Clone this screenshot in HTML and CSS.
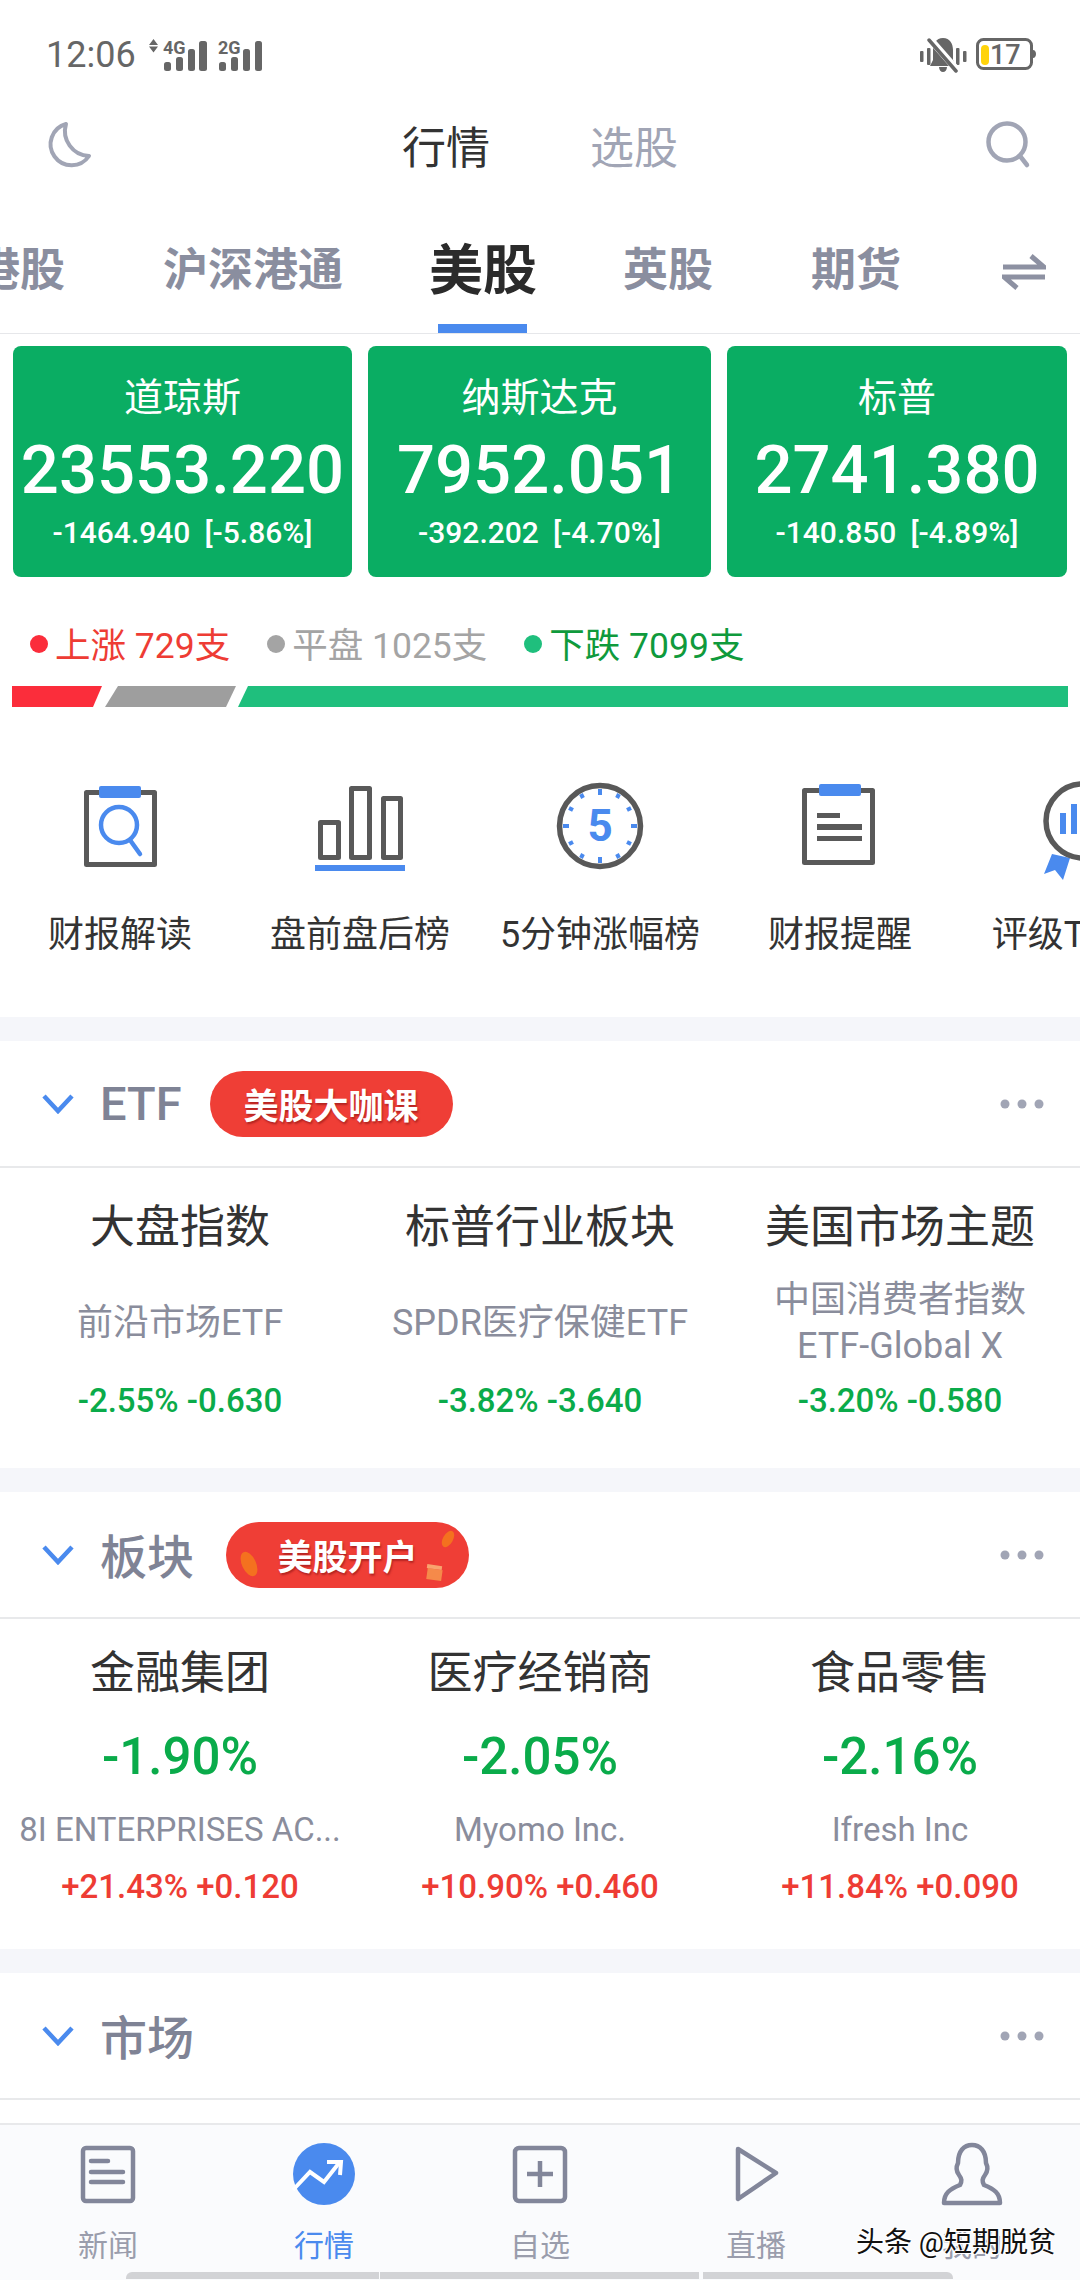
FILE: index.html
```html
<!DOCTYPE html>
<html lang="zh-CN">
<head>
  <meta charset="UTF-8" />
  <title>行情 - 美股</title>
  <link rel="stylesheet" href="styles.css">
</head>
<body>
<div class="page">

  <!-- Status bar -->
  <div class="status">
    <span class="time">12:06</span>
    <svg class="signal" width="114" height="34" viewBox="0 0 114 34">
      <path d="M0 7l4.500-6 4.500 6zM0 8.500h9l-4.500 6z" fill="#666"/>
      <text x="14" y="16" class="net">4G</text>
      <rect x="15" y="24" width="7" height="9" rx="2.500" fill="#666"/>
      <rect x="27" y="19" width="7" height="14" rx="2.500" fill="#666"/>
      <rect x="39" y="11" width="7" height="22" rx="2.500" fill="#666"/>
      <rect x="50" y="3" width="8" height="30" rx="2.500" fill="#666"/>
      <text x="69" y="16" class="net">2G</text>
      <rect x="70" y="24" width="7" height="9" rx="2.500" fill="#666"/>
      <rect x="82" y="19" width="7" height="14" rx="2.500" fill="#666"/>
      <rect x="94" y="11" width="7" height="22" rx="2.500" fill="#666"/>
      <rect x="106" y="3" width="7" height="30" rx="2.500" fill="#666"/>
    </svg>
    <svg class="sys" width="116" height="36" viewBox="0 0 116 36">
      <rect x="0" y="14" width="3.500" height="11" rx="1" fill="#666"/>
      <rect x="7" y="11" width="3.500" height="17" rx="1" fill="#666"/>
      <rect x="36" y="11" width="3.500" height="17" rx="1" fill="#666"/>
      <rect x="43" y="14" width="3.500" height="11" rx="1" fill="#666"/>
      <path d="M23 1c7 0 10 6 10 12v10l3 6H10l3-6V13C13 7 16 1 23 1zM19 30h8c0 3-2 5-4 5s-4-2-4-5z" fill="#666"/>
      <path d="M9 1l29 33" stroke="#fff" stroke-width="7"/>
      <path d="M9 3l27 31" stroke="#666" stroke-width="3.500" stroke-linecap="round"/>
      <rect x="57.500" y="2.500" width="54" height="29" rx="6" fill="none" stroke="#666" stroke-width="3"/>
      <rect x="61" y="8" width="8" height="20" rx="4" fill="#ffd30a"/>
      <path d="M113 13c2 0 3 2 3 4s-1 4-3 4z" fill="#666"/>
      <text x="70" y="27" class="batt">17</text>
    </svg>
  </div>

  <!-- Top bar -->
  <div class="topbar">
    <svg class="moon" width="48" height="48" viewBox="0 0 48 48">
      <path d="M22 3A21 21 0 1 0 45 35A25 25 0 0 1 22 3Z" fill="none" stroke="#a1a5b5" stroke-width="4" stroke-linejoin="round"/>
    </svg>
    <div class="switch">
      <span class="on">行情</span>
      <span>选股</span>
    </div>
    <svg class="search" width="50" height="52" viewBox="0 0 50 52">
      <circle cx="23" cy="23" r="18.500" fill="none" stroke="#a1a5b5" stroke-width="4.500"/>
      <path d="M36 37l7 9" stroke="#a1a5b5" stroke-width="4.500" stroke-linecap="round"/>
    </svg>
  </div>

  <!-- Market tabs -->
  <div class="tabs">
    <span class="tab">港股</span>
    <span class="tab">沪深港通</span>
    <span class="tab active">美股</span>
    <span class="tab">英股</span>
    <span class="tab">期货</span>
    <svg class="swap" width="44" height="36" viewBox="0 0 44 36">
      <path d="M1 13h41L29 2" fill="none" stroke="#8d91a2" stroke-width="5"/>
      <path d="M43 23H2l13 11" fill="none" stroke="#8d91a2" stroke-width="5"/>
    </svg>
  </div>

  <!-- Index cards -->
  <div class="cards">
    <div class="card">
      <div class="card-name">道琼斯</div>
      <div class="card-num">23553.220</div>
      <div class="card-sub"><span>-1464.940</span><span>[-5.86%]</span></div>
    </div>
    <div class="card">
      <div class="card-name">纳斯达克</div>
      <div class="card-num">7952.051</div>
      <div class="card-sub"><span>-392.202</span><span>[-4.70%]</span></div>
    </div>
    <div class="card">
      <div class="card-name">标普</div>
      <div class="card-num">2741.380</div>
      <div class="card-sub"><span>-140.850</span><span>[-4.89%]</span></div>
    </div>
  </div>

  <!-- Rise / fall counts -->
  <div class="breadth">
    <span class="count up"><i></i>上涨 729支</span>
    <span class="count flat"><i></i>平盘 1025支</span>
    <span class="count down"><i></i>下跌 7099支</span>
  </div>
  <div class="ratio">
    <div class="ratio-up"></div>
    <div class="ratio-flat"></div>
    <div class="ratio-down"></div>
  </div>

  <!-- Shortcuts -->
  <div class="shortcuts">
    <div class="shortcut">
      <svg width="100" height="100" viewBox="0 0 100 100">
        <rect x="16.500" y="12.500" width="68" height="72" fill="none" stroke="#595959" stroke-width="5" stroke-linejoin="round"/>
        <rect x="29" y="6" width="42" height="12" rx="2" fill="#4a8aee"/>
        <circle cx="49" cy="45" r="18" fill="none" stroke="#4a8aee" stroke-width="4.500"/>
        <path d="M60 60l10 14" stroke="#4a8aee" stroke-width="4.500" stroke-linecap="round"/>
      </svg>
      <span>财报解读</span>
    </div>
    <div class="shortcut">
      <svg width="100" height="100" viewBox="0 0 100 100">
        <rect x="10.500" y="42.500" width="18" height="35" fill="none" stroke="#595959" stroke-width="5" stroke-linejoin="round"/>
        <rect x="41.500" y="8.500" width="18" height="69" fill="none" stroke="#595959" stroke-width="5" stroke-linejoin="round"/>
        <rect x="73.500" y="18.500" width="17" height="59" fill="none" stroke="#595959" stroke-width="5" stroke-linejoin="round"/>
        <rect x="5" y="85" width="90" height="6" fill="#4a8aee"/>
      </svg>
      <span>盘前盘后榜</span>
    </div>
    <div class="shortcut">
      <svg width="100" height="100" viewBox="0 0 100 100">
        <circle cx="50" cy="46" r="40.500" fill="none" stroke="#595959" stroke-width="5.500"/>
        <path d="M50 9v6M50 77v6M13 46h6M81 46h6M69 14l-2 4M31 78l2-4M31 14l2 4M69 78l-2-4M19 28l4 2M81 28l-4 2M19 64l4-2M81 64l-4-2" stroke="#4a8aee" stroke-width="4"/>
        <text x="50" y="61" class="five">5</text>
      </svg>
      <span>5分钟涨幅榜</span>
    </div>
    <div class="shortcut">
      <svg width="100" height="100" viewBox="0 0 100 100">
        <rect x="14.500" y="10.500" width="68" height="72" fill="none" stroke="#595959" stroke-width="5" stroke-linejoin="round"/>
        <rect x="29" y="4" width="42" height="12" rx="2" fill="#4a8aee"/>
        <rect x="27" y="33" width="23" height="5" fill="#595959"/>
        <rect x="27" y="44" width="45" height="6" fill="#595959"/>
        <rect x="27" y="56" width="45" height="5" fill="#595959"/>
      </svg>
      <span>财报提醒</span>
    </div>
    <div class="shortcut">
      <svg width="100" height="100" viewBox="0 0 100 100">
        <path d="M22 74l-8 20 11-4 8 10 7-22z" fill="#4a8aee"/>
        <circle cx="53" cy="41" r="37" fill="#fff" stroke="#595959" stroke-width="5.500"/>
        <rect x="30" y="33" width="6" height="21" fill="#4a8aee"/>
        <rect x="41" y="24" width="6" height="30" fill="#4a8aee"/>
        <rect x="52" y="39" width="6" height="15" fill="#4a8aee"/>
      </svg>
      <span>评级TOP榜</span>
    </div>
  </div>

  <div class="gap"></div>

  <!-- ETF -->
  <div class="sec-head">
    <svg class="chev" width="32" height="20" viewBox="0 0 32 20"><path d="M2 2l14 15L30 2" fill="none" stroke="#4a8aee" stroke-width="4.500"/></svg>
    <span class="sec-title">ETF</span>
    <span class="pill">美股大咖课</span>
    <svg class="more" width="44" height="12" viewBox="0 0 44 12"><circle cx="5" cy="6" r="4.500"/><circle cx="22" cy="6" r="4.500"/><circle cx="39" cy="6" r="4.500"/></svg>
  </div>
  <div class="grid etf">
    <div class="cell">
      <div class="cell-title">大盘指数</div>
      <div class="cell-sub">前沿市场ETF</div>
      <div class="cell-row down-text">-2.55% -0.630</div>
    </div>
    <div class="cell">
      <div class="cell-title">标普行业板块</div>
      <div class="cell-sub">SPDR医疗保健ETF</div>
      <div class="cell-row down-text">-3.82% -3.640</div>
    </div>
    <div class="cell">
      <div class="cell-title">美国市场主题</div>
      <div class="cell-sub">中国消费者指数<br>ETF-Global X</div>
      <div class="cell-row down-text">-3.20% -0.580</div>
    </div>
  </div>

  <div class="gap"></div>

  <!-- Sectors -->
  <div class="sec-head">
    <svg class="chev" width="32" height="20" viewBox="0 0 32 20"><path d="M2 2l14 15L30 2" fill="none" stroke="#4a8aee" stroke-width="4.500"/></svg>
    <span class="sec-title cjk">板块</span>
    <span class="pill pill-open">美股开户
      <svg class="pill-art" width="243" height="66" viewBox="0 0 243 66">
        <ellipse cx="23" cy="42" rx="7" ry="13" transform="rotate(-25 23 42)" fill="#f4711f"/>
        <ellipse cx="222" cy="17" rx="5" ry="9" transform="rotate(30 222 17)" fill="#f4711f"/>
        <rect x="201" y="47" width="15" height="11" transform="rotate(8 208 52)" fill="#f58a4a"/>
        <rect x="201" y="43" width="15" height="4" transform="rotate(8 208 45)" fill="#f9a36e"/>
      </svg>
    </span>
    <svg class="more" width="44" height="12" viewBox="0 0 44 12"><circle cx="5" cy="6" r="4.500"/><circle cx="22" cy="6" r="4.500"/><circle cx="39" cy="6" r="4.500"/></svg>
  </div>
  <div class="grid sectors">
    <div class="cell">
      <div class="cell-title">金融集团</div>
      <div class="cell-pct down-text">-1.90%</div>
      <div class="cell-name">8I ENTERPRISES AC...</div>
      <div class="cell-row up-text">+21.43% +0.120</div>
    </div>
    <div class="cell">
      <div class="cell-title">医疗经销商</div>
      <div class="cell-pct down-text">-2.05%</div>
      <div class="cell-name">Myomo Inc.</div>
      <div class="cell-row up-text">+10.90% +0.460</div>
    </div>
    <div class="cell">
      <div class="cell-title">食品零售</div>
      <div class="cell-pct down-text">-2.16%</div>
      <div class="cell-name">Ifresh Inc</div>
      <div class="cell-row up-text">+11.84% +0.090</div>
    </div>
  </div>

  <div class="gap"></div>

  <!-- Markets -->
  <div class="sec-head">
    <svg class="chev" width="32" height="20" viewBox="0 0 32 20"><path d="M2 2l14 15L30 2" fill="none" stroke="#4a8aee" stroke-width="4.500"/></svg>
    <span class="sec-title cjk">市场</span>
    <svg class="more" width="44" height="12" viewBox="0 0 44 12"><circle cx="5" cy="6" r="4.500"/><circle cx="22" cy="6" r="4.500"/><circle cx="39" cy="6" r="4.500"/></svg>
  </div>
  <div class="sec-rest"></div>

  <!-- Bottom nav -->
  <div class="nav">
    <div class="nav-items">
      <div class="nav-item">
        <svg width="80" height="70" viewBox="0 0 80 70">
          <rect x="15" y="8" width="50" height="53" rx="3" fill="none" stroke="#82869a" stroke-width="4.500"/>
          <path d="M23 21h17M23 32h32M23 42h32" stroke="#82869a" stroke-width="4.500" stroke-linecap="round"/>
        </svg>
        <span>新闻</span>
      </div>
      <div class="nav-item current">
        <svg width="80" height="70" viewBox="0 0 80 70">
          <circle cx="40" cy="34" r="31" fill="#4a8aee"/>
          <path d="M9 50l17-18 14 10 15-19" fill="none" stroke="#fff" stroke-width="4"/>
          <path d="M43 22h14l-1 13" fill="none" stroke="#fff" stroke-width="4"/>
        </svg>
        <span>行情</span>
      </div>
      <div class="nav-item">
        <svg width="80" height="70" viewBox="0 0 80 70">
          <rect x="15" y="8" width="50" height="53" rx="4" fill="none" stroke="#82869a" stroke-width="4.500"/>
          <path d="M27 34h26M40 21v26" stroke="#82869a" stroke-width="4.500"/>
        </svg>
        <span>自选</span>
      </div>
      <div class="nav-item">
        <svg width="80" height="70" viewBox="0 0 80 70">
          <path d="M22 9L60 33 22 59Z" fill="none" stroke="#82869a" stroke-width="4.500" stroke-linejoin="round"/>
        </svg>
        <span>直播</span>
      </div>
      <div class="nav-item">
        <svg width="80" height="70" viewBox="0 0 80 70">
          <path d="M12 63C12 53 18 49 28 45C30 41 30 39 27 35C24 31 24 27 26 23C26 11 32 5 40 5C48 5 54 11 54 23C56 27 56 31 53 35C50 39 50 41 52 45C62 49 68 53 68 63Z" fill="none" stroke="#82869a" stroke-width="4.500" stroke-linejoin="round"/>
        </svg>
        <span>我的</span>
      </div>
    </div>
    <div class="handle">
      <i></i><i></i><i></i>
    </div>
    <div class="watermark">头条 @短期脱贫</div>
  </div>

</div>
</body>
</html>
```

FILE: styles.css
```css
* {
  box-sizing: border-box;
}

body {
  margin: 0;
  font-family: Roboto, "Noto Sans CJK SC", sans-serif;
  background-color: #fff;
}

.page {
  width: 1080px;
  height: 2280px;
  overflow: hidden;
  display: flex;
  flex-direction: column;
}

/* Status bar */
.status {
  height: 95px;
  flex: none;
  display: flex;
  align-items: center;
  padding: 14px 44px 0 46px;
  color: #666;
}

.time {
  font-size: 36px;
  line-height: 40px;
}

.signal {
  margin-left: 13px;
}

.sys {
  margin-left: auto;
}

.net {
  font-size: 18px;
  font-weight: 700;
  fill: #666;
}

.batt {
  font-size: 27px;
  font-weight: 500;
  fill: #666;
}

/* Top bar */
.topbar {
  height: 105px;
  flex: none;
  display: flex;
  align-items: center;
  padding: 0 46px 6px 44px;
}

.switch {
  display: flex;
  gap: 100px;
  margin-left: 310px;
  font-size: 44px;
  color: #a1a5b5;
}

.switch .on {
  color: #333;
}

.search {
  margin-left: auto;
}

/* Market tabs */
.tabs {
  height: 134px;
  flex: none;
  display: flex;
  align-items: stretch;
  margin-left: -74px;
  border-bottom: 1px solid #e6e7ea;
  font-size: 45px;
  font-weight: 700;
  color: #8a8e9f;
  white-space: nowrap;
}

.tab {
  position: relative;
  display: flex;
  align-items: center;
  padding: 0 49px;
}

.tab.active {
  padding: 0 37px;
  font-size: 54px;
  color: #2b2b2b;
}

.tab.active::after {
  content: "";
  position: absolute;
  left: 46px;
  right: 47px;
  bottom: 0;
  height: 9px;
  background-color: #4a8aee;
}

.swap {
  align-self: center;
  margin: 10px 0 0 52px;
}

/* Index cards */
.cards {
  flex: none;
  display: grid;
  grid-template-columns: 339px 343px 340px;
  gap: 16px;
  padding: 12px 13px 0;
}

.card {
  height: 231px;
  padding-top: 24px;
  border-radius: 8px;
  background-color: #0aad63;
  color: #fff;
  text-align: center;
}

.card-name {
  font-size: 39px;
  line-height: 56px;
}

.card-num {
  font-size: 67px;
  font-weight: 500;
  line-height: 88px;
  white-space: nowrap;
}

.card-sub {
  display: flex;
  justify-content: center;
  gap: 14px;
  font-size: 30px;
  font-weight: 500;
  line-height: 38px;
}

/* Rise / fall counts */
.breadth {
  flex: none;
  display: flex;
  height: 88px;
  padding: 49px 0 0 30px;
  font-size: 35.500px;
  line-height: 40px;
  white-space: nowrap;
}

.count {
  display: flex;
  align-items: center;
  margin-right: 37px;
}

.count i {
  width: 18px;
  height: 18px;
  margin: 0 7px 4px 0;
  border-radius: 50%;
}

.up { color: #ee3c34; }
.up i { background-color: #fb2d3b; }
.flat { color: #a4a4a4; }
.flat i { background-color: #a4a4a4; }
.down { color: #0f9a3c; }
.down i { background-color: #1fbf7d; }

.ratio {
  flex: none;
  display: flex;
  gap: 3px;
  height: 21px;
  margin: 21px 12px 0;
}

.ratio div {
  height: 100%;
}

.ratio-up {
  width: 90px;
  background-color: #fb2d3b;
  clip-path: polygon(0 0, 100% 0, calc(100% - 9px) 100%, 0 100%);
}

.ratio-flat {
  width: 131px;
  background-color: #9e9e9e;
  clip-path: polygon(13px 0, 100% 0, calc(100% - 10px) 100%, 0 100%);
}

.ratio-down {
  flex: 1;
  margin-left: -1px;
  background-color: #1fbf7d;
  clip-path: polygon(10px 0, 100% 0, 100% 100%, 0 100%);
}

/* Shortcuts */
.shortcuts {
  flex: none;
  display: grid;
  grid-template-columns: repeat(5, 240px);
  height: 310px;
  padding-top: 73px;
}

.shortcut {
  display: flex;
  flex-direction: column;
  align-items: center;
  font-size: 36px;
  line-height: 44px;
  color: #333;
  white-space: nowrap;
}

.shortcut span {
  margin-top: 33px;
}

.five {
  font-size: 44px;
  font-weight: 700;
  fill: #4a8aee;
  text-anchor: middle;
}

/* Sections */
.gap {
  height: 24px;
  flex: none;
  background-color: #f5f6fa;
}

.sec-head {
  height: 127px;
  flex: none;
  display: flex;
  align-items: center;
  padding: 0 36px 0 42px;
  border-bottom: 2px solid #e8e9eb;
}

.sec-title {
  margin-left: 26px;
  font-size: 47px;
  font-weight: 500;
  color: #7f8395;
}

.sec-title.cjk {
  padding-bottom: 3px;
}

.chev {
  flex: none;
}

.more {
  margin-left: auto;
  fill: #a1a5b5;
}

.pill {
  position: relative;
  display: flex;
  align-items: center;
  justify-content: center;
  width: 243px;
  height: 66px;
  margin-left: 28px;
  border-radius: 33px;
  background-color: #ef3e36;
  color: #fff;
  font-size: 35px;
  font-weight: 700;
  text-shadow: 1px 2px 2px rgba(140, 20, 20, 0.6);
}

.pill-open {
  margin-left: 32px;
}

.pill-art {
  position: absolute;
  left: 0;
  top: 0;
}

.grid {
  flex: none;
  display: grid;
  grid-template-columns: repeat(3, 360px);
  text-align: center;
}

.etf {
  height: 300px;
  padding-top: 30px;
}

.sectors {
  height: 330px;
  padding-top: 25px;
}

.cell {
  white-space: nowrap;
}

.cell-title {
  font-size: 45px;
  line-height: 60px;
  color: #333;
}

.cell-sub {
  display: flex;
  align-items: center;
  justify-content: center;
  height: 92px;
  margin-top: 19px;
  font-size: 36px;
  line-height: 46px;
  color: #8a8d9c;
}

.cell-row {
  margin-top: 10px;
  font-size: 33px;
  font-weight: 500;
  line-height: 44px;
}

.cell-pct {
  margin-top: 21px;
  font-size: 51px;
  font-weight: 500;
  line-height: 64px;
}

.cell-name {
  margin-top: 19px;
  font-size: 33px;
  line-height: 44px;
  color: #8a8d9c;
}

.sectors .cell-row {
  margin-top: 13px;
}

.up-text { color: #ee3c34; }
.down-text { color: #0aab4a; }

.sec-rest {
  flex: 1;
}

/* Bottom nav */
.nav {
  position: relative;
  height: 157px;
  flex: none;
  border-top: 2px solid #e8e9eb;
  background-color: #fafbfd;
}

.nav-items {
  display: grid;
  grid-template-columns: repeat(5, 216px);
  padding-top: 15px;
}

.nav-item {
  display: flex;
  flex-direction: column;
  align-items: center;
  font-size: 30px;
  line-height: 40px;
  color: #9a9dac;
}

.nav-item span {
  margin-top: 16px;
}

.nav-item.current {
  color: #4a8aee;
}

.handle {
  display: flex;
  height: 7px;
  margin-top: 6px;
  padding-left: 126px;
}

.handle i {
  display: block;
  height: 7px;
  background-color: #d2d3d6;
}

.handle i:nth-child(1) {
  width: 253px;
  border-radius: 6px 0 0 0;
}

.handle i:nth-child(2) {
  width: 319px;
  margin: 0 4px 0 1px;
}

.handle i:nth-child(3) {
  width: 250px;
  border-radius: 0 6px 0 0;
}

.watermark {
  position: absolute;
  right: 24px;
  top: 98px;
  font-size: 28px;
  line-height: 40px;
  color: #111;
  white-space: nowrap;
  text-shadow: 1px 1px 0 #fff, -1px -1px 0 #fff, 1px -1px 0 #fff, -1px 1px 0 #fff;
}
```
